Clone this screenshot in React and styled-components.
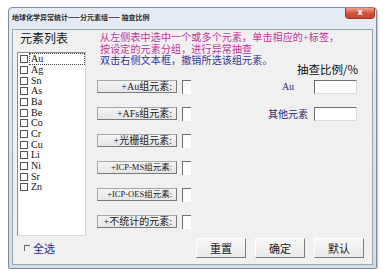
import React from "react";
import styled, { createGlobalStyle } from "styled-components";

const GlobalStyle = createGlobalStyle`
  html, body {
    margin: 0;
    padding: 0;
    background: #ffffff;
  }
  body {
    font-family: "Liberation Serif", "Noto Sans CJK SC", serif;
  }
`;

const Window = styled.div`
  margin: 7px 0 0 8px;
  width: 369px;
  height: 262px;
  box-sizing: border-box;
  border: 1px solid #7d8a99;
  border-radius: 4px 4px 2px 2px;
  background: linear-gradient(to bottom, #e4ebf3, #d3dde9);
  display: flex;
  flex-direction: column;
  box-shadow: 1px 1px 2px rgba(0, 0, 0, 0.25);
`;

const TitleBar = styled.div`
  height: 21px;
  display: flex;
  align-items: flex-start;
  justify-content: space-between;
  padding: 0 1px 0 3px;
`;

const Title = styled.span`
  margin-top: 5px;
  font-size: 7px;
  line-height: 9px;
  font-weight: bold;
  color: #2b2b2b;
  font-family: "Noto Sans CJK SC", sans-serif;
  white-space: nowrap;
`;

const CloseButton = styled.div`
  width: 28px;
  height: 10px;
  border: 1px solid #9e3a2a;
  border-top: none;
  border-radius: 0 0 4px 4px;
  background: linear-gradient(to bottom, #eba08f, #d0533c 55%, #c54330);
  color: #ffffff;
  font-family: "DejaVu Sans", sans-serif;
  font-size: 8px;
  font-weight: bold;
  line-height: 10px;
  text-align: center;
`;

const Client = styled.div`
  flex: 1;
  margin: 0 3px 3px 3px;
  border: 1px solid #9aa5b2;
  background: #f0f0f0;
  padding: 2px 0 0 4px;
  display: grid;
  grid-template-columns: 69px 1fr;
  grid-template-rows: 204px auto;
  column-gap: 10px;
`;

const LeftCol = styled.div`
  display: flex;
  flex-direction: column;
`;

const SectionLabel = styled.div`
  margin: 0 0 6px 3px;
  font-size: 12px;
  line-height: 14px;
  color: #1a1a1a;
`;

const ListBox = styled.div`
  flex: 1;
  background: #ffffff;
  border: 1px solid #8a8f98;
  border-right-color: #d8d8d8;
  border-bottom-color: #d8d8d8;
  padding-top: 1px;
`;

const ListItem = styled.div`
  display: flex;
  align-items: center;
  height: 10.67px;
  padding-left: 2px;
`;

const Box = styled.span`
  width: 6px;
  height: 6px;
  border: 1px solid #555;
  background: #fff;
  flex-shrink: 0;
`;

const ItemText = styled.span`
  margin-left: 2px;
  flex: 1;
  font-size: 10px;
  line-height: 10px;
  color: #111;
  padding-left: 1px;
  outline: ${(p) => (p.focused ? "1px dotted #444" : "none")};
  margin-right: 1px;
`;

const RightCol = styled.div`
  display: flex;
  flex-direction: column;
`;

const Hint = styled.div`
  padding-left: 4px;
  font-size: 10px;
  line-height: 11.5px;
  letter-spacing: 0.15px;
  color: ${(p) => p.color};
  white-space: nowrap;
`;

const RatioHeader = styled.div`
  margin-top: -4px;
  text-align: right;
  padding-right: 14px;
  font-size: 11.5px;
  line-height: 12px;
  color: #111;
  font-family: "Noto Sans CJK SC", sans-serif;
`;

const Rows = styled.div`
  margin-top: 5px;
  display: flex;
  flex-direction: column;
  gap: 13px;
`;

const GroupRow = styled.div`
  display: flex;
  align-items: center;
  height: 14px;
`;

const GroupButton = styled.div`
  width: 80px;
  height: 13px;
  box-sizing: border-box;
  margin-left: 1px;
  border: 1px solid #a7a7a7;
  border-right-color: #7a7a7a;
  border-bottom-color: #7a7a7a;
  background: linear-gradient(to bottom, #f4f4f4, #e6e6e6);
  text-align: right;
  padding-right: 4px;
  font-size: ${(p) => (p.small ? "8.5px" : "10px")};
  line-height: 11px;
  color: #222;
  white-space: nowrap;
`;

const TinyField = styled.div`
  margin-left: 5px;
  width: 9px;
  height: 14px;
  box-sizing: border-box;
  background: #ffffff;
  border-left: 1px solid #6e6e6e;
  border-top: 1px solid #6e6e6e;
`;

const RatioLabel = styled.div`
  margin-left: auto;
  width: 46px;
  text-align: center;
  font-size: 10px;
  color: #2a2a78;
`;

const RatioInput = styled.div`
  margin: 0 15px 0 3px;
  width: 43px;
  height: 14px;
  box-sizing: border-box;
  background: #ffffff;
  border: 1px solid #dcdcdc;
  border-left-color: #6e6e6e;
  border-top-color: #6e6e6e;
`;

const Footer = styled.div`
  grid-column: 1 / span 2;
  margin-top: 2px;
  height: 20px;
  display: flex;
  align-items: center;
`;

const CheckAll = styled.div`
  margin-left: 7px;
  display: flex;
  align-items: center;
  gap: 3px;
  color: #2a2a9a;
  font-size: 11px;
  font-family: "Noto Sans CJK SC", sans-serif;
`;

const FlatBox = styled.span`
  width: 5px;
  height: 5px;
  border-left: 1px solid #666;
  border-top: 1px solid #666;
`;

const Actions = styled.div`
  margin-left: auto;
  margin-right: 8px;
  display: flex;
  gap: 9px;
`;

const ActionButton = styled.div`
  width: 50px;
  height: 20px;
  box-sizing: border-box;
  border: 1px solid #ffffff;
  border-right-color: #7d7d7d;
  border-bottom-color: #7d7d7d;
  background: linear-gradient(to bottom, #f6f6f6, #e9e9e9);
  text-align: center;
  font-size: 11px;
  line-height: 18px;
  color: #1a1a1a;
  font-family: "Noto Sans CJK SC", sans-serif;
`;

const elements = ["Au", "Ag", "Sn", "As", "Ba", "Be", "Co", "Cr", "Cu", "Li", "Ni", "Sr", "Zn"];

const groups = [
  { label: "+Au组元素:", ratio: "Au" },
  { label: "+AFs组元素:", ratio: "其他元素" },
  { label: "+光栅组元素:" },
  { label: "+ICP-MS组元素:", small: true },
  { label: "+ICP-OES组元素:", small: true },
  { label: "+不统计的元素:" },
];

export default function App() {
  return (
    <>
      <GlobalStyle />
      <Window>
        <TitleBar>
          <Title>地球化学异常统计——分元素组—— 抽查比例</Title>
          <CloseButton>x</CloseButton>
        </TitleBar>
        <Client>
          <LeftCol>
            <SectionLabel>元素列表</SectionLabel>
            <ListBox>
              {elements.map((el, i) => (
                <ListItem key={el}>
                  <Box />
                  <ItemText focused={i === 0}>{el}</ItemText>
                </ListItem>
              ))}
            </ListBox>
          </LeftCol>
          <RightCol>
            <Hint color="#c0349c">从左侧表中选中一个或多个元素，单击相应的+标签，</Hint>
            <Hint color="#c0349c">按设定的元素分组，进行异常抽查</Hint>
            <Hint color="#343496">双击右侧文本框，撤销所选该组元素。</Hint>
            <RatioHeader>抽查比例/%</RatioHeader>
            <Rows>
              {groups.map((g) => (
                <GroupRow key={g.label}>
                  <GroupButton small={g.small}>{g.label}</GroupButton>
                  <TinyField />
                  {g.ratio && (
                    <>
                      <RatioLabel>{g.ratio}</RatioLabel>
                      <RatioInput />
                    </>
                  )}
                </GroupRow>
              ))}
            </Rows>
          </RightCol>
          <Footer>
            <CheckAll>
              <FlatBox />
              全选
            </CheckAll>
            <Actions>
              <ActionButton>重置</ActionButton>
              <ActionButton>确定</ActionButton>
              <ActionButton>默认</ActionButton>
            </Actions>
          </Footer>
        </Client>
      </Window>
    </>
  );
}
